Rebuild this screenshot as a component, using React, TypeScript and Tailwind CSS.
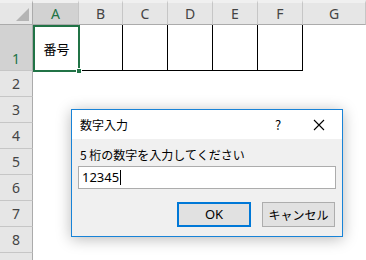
import React from "react";

const cols = ["A", "B", "C", "D", "E", "F", "G"];
const rows = [2, 3, 4, 5, 6, 7, 8];

export default function App() {
  return (
    <div
      className="relative w-[366px] h-[260px] overflow-hidden bg-white"
      style={{ fontFamily: '"Noto Sans", "Liberation Sans", "Noto Sans CJK JP", sans-serif' }}
    >
      <div className="grid grid-cols-[33px_46px_44px_45px_45px_45px_45px_63px] grid-rows-[25px_46px_26px_26px_26px_26px_26px_26px_26px_26px]">
        <div className="relative bg-[#e6e6e6] border-r border-b border-[#ababab] border-t-[3px] border-t-[#f0f0f0]">
          <div className="absolute right-[3px] bottom-[3px] w-0 h-0 border-l-[13px] border-l-transparent border-b-[13px] border-b-[#b4b4b4]" />
        </div>
        {cols.map((c, i) => (
          <div
            key={c}
            className={
              "flex items-center justify-center border-b border-b-[#ababab] border-r border-r-[#c6c6c6] border-t-[3px] border-t-[#f0f0f0] text-[14px] " +
              (i === 0 ? "bg-[#d2d2d2] text-[#217346]" : "bg-[#e6e6e6] text-[#444]")
            }
          >
            {c}
          </div>
        ))}
        <div className="flex items-end justify-center pb-[1px] bg-[#d2d2d2] text-[#217346] text-[14px] border-r border-r-[#ababab] border-b border-b-[#c6c6c6]">
          1
        </div>
        <div className="relative -mr-px -mb-px z-10 border-2 border-[#217346] flex items-center justify-center text-[13px] text-black" style={{ fontFamily: '"Noto Sans CJK JP", sans-serif' }}>
          番号
          <div className="absolute -right-[4px] -bottom-[4px] w-[6px] h-[6px] bg-[#217346] border border-white" />
        </div>
        {[0, 1, 2, 3, 4].map((k) => (
          <div key={k} className="border-r border-b border-black" />
        ))}
        <div />
        {rows.map((r) => (
          <React.Fragment key={r}>
            <div className="flex items-center justify-center bg-[#e6e6e6] text-[#444] text-[14px] border-r border-r-[#ababab] border-b border-b-[#c6c6c6]">
              {r}
            </div>
            <div className="col-span-7" />
          </React.Fragment>
        ))}
        <div className="bg-[#e6e6e6] border-r border-r-[#ababab]" />
        <div className="col-span-7" />
      </div>

      <div
        className="absolute left-[71px] top-[109px] w-[272px] h-[128px] border border-[#1883d7] bg-[#f0f0f0] shadow-[0_2px_14px_rgba(0,0,0,0.28)] flex flex-col text-[12px] text-black"
        style={{ fontFamily: '"Noto Sans CJK JP", sans-serif' }}
      >
        <div className="h-[29px] bg-white flex items-center pl-[8px]">
          <span className="flex-1 text-[12px]">数字入力</span>
          <span className="w-[20px] text-center text-[13px] mr-[25px]">?</span>
          <svg width="12" height="12" viewBox="0 0 12 12" className="mr-[17px]">
            <path d="M1 1L11 11M11 1L1 11" stroke="#000" strokeWidth="1.1" />
          </svg>
        </div>
        <div className="flex flex-col px-[6px] pt-[8px]">
          <div className="pl-[2px] h-[16px] leading-[16px] text-[12px]">5 桁の数字を入力してください</div>
          <div className="mt-[3px] h-[23px] bg-white border border-[#acacac] flex items-center pl-[3px] text-[13px]" style={{ fontFamily: '"Noto Sans", "Liberation Sans", sans-serif' }}>
            12345
            <span className="w-px h-[15px] bg-black ml-px" />
          </div>
          <div className="mt-[13px] flex justify-end gap-[11px] pr-[1px]">
            <div className="w-[74px] h-[25px] border-2 border-[#0078d7] bg-[#e1e1e1] flex items-center justify-center text-[13px]" style={{ fontFamily: '"Noto Sans", "Liberation Sans", sans-serif' }}>
              OK
            </div>
            <div className="w-[73px] h-[25px] border border-[#adadad] bg-[#e1e1e1] flex items-center justify-center text-[12px]">
              キャンセル
            </div>
          </div>
        </div>
      </div>
    </div>
  );
}
